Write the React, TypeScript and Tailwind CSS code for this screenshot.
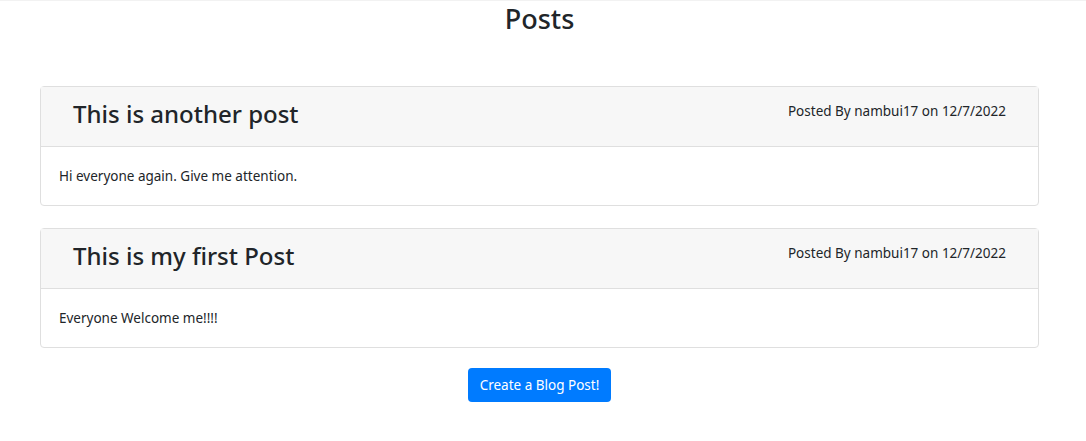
import React from "react";

const posts = [
  { title: "This is another post", author: "nambui17", date: "12/7/2022", body: "Hi everyone again. Give me attention." },
  { title: "This is my first Post", author: "nambui17", date: "12/7/2022", body: "Everyone Welcome me!!!!" },
];

export default function App() {
  return (
    <div className="min-h-[441px] bg-white text-[#212529]" style={{ fontFamily: '"Noto Sans", "Open Sans", sans-serif' }}>
      <div className="h-px bg-[#f2f2f2]" />
      <div className="pl-10 pr-[47px]">
        <h2 className="text-center text-[27px] leading-[34px] font-medium pt-[1px]">Posts</h2>
        <div className="pt-[50px] flex flex-col gap-[22px]">
          {posts.map((p) => (
            <div key={p.title} className="border border-[#dfdfdf] rounded-[4px] bg-white">
              <div className="bg-[#f7f7f7] border-b border-[#dfdfdf] h-[60px] flex justify-between items-start pl-8 pr-8">
                <h3 className="text-[24px] leading-[30px] mt-[12px] font-medium">{p.title}</h3>
                <span className="text-[13.5px] leading-5 mt-[14px]">Posted By {p.author} on {p.date}</span>
              </div>
              <div className="h-[58px] flex items-center px-[18px] text-[13.5px] pt-[1px]">{p.body}</div>
            </div>
          ))}
          <div className="flex justify-center -mt-[2px]">
            <button className="bg-[#007bff] text-white text-[13.5px] rounded-[4px] h-[34px] px-3">Create a Blog Post!</button>
          </div>
        </div>
      </div>
    </div>
  );
}
